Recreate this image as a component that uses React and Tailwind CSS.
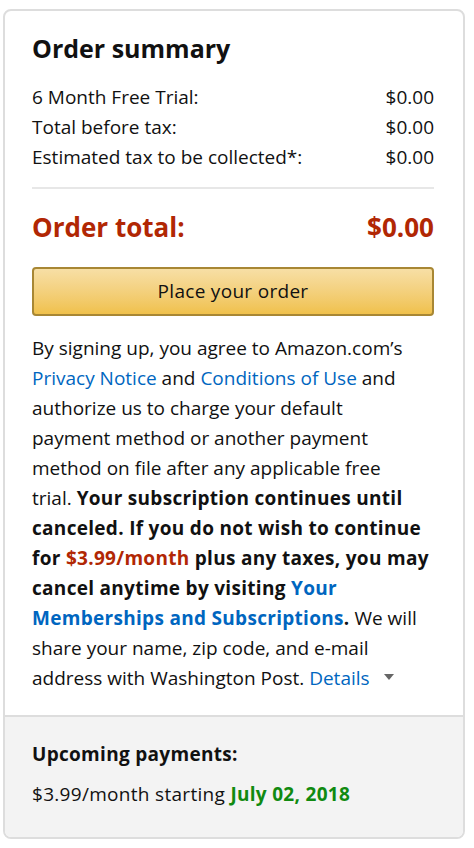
export default function App() {
  return (
    <div
      className="min-h-screen bg-white pt-[9px] pl-[3px] text-[#111]"
      style={{ fontFamily: "'Open Sans', 'Noto Sans', Arial, sans-serif" }}
    >
      <div className="w-[462px] h-[830px] border-2 border-[#ddd] rounded-[8px] overflow-hidden flex flex-col">
        {/* ================= SUMMARY ================= */}
        <div className="pl-[27px] pr-[29px] pt-[19px] pb-[22px]">
          <h1 className="text-[25px] leading-[36px] font-bold">Order summary</h1>

          <div className="mt-[16px] text-[19px] leading-[30px]">
            <div className="flex justify-between">
              <span>6 Month Free Trial:</span>
              <span>$0.00</span>
            </div>
            <div className="flex justify-between">
              <span>Total before tax:</span>
              <span>$0.00</span>
            </div>
            <div className="flex justify-between">
              <span>Estimated tax to be collected*:</span>
              <span>$0.00</span>
            </div>
          </div>

          <div className="mt-[15px] h-[2px] bg-[#e7e7e7]" />

          <div className="mt-[20px] flex justify-between text-[26px] leading-[36px] font-bold text-[#B12704]">
            <span>Order total:</span>
            <span>$0.00</span>
          </div>

          <button className="mt-[22px] w-full h-[49px] rounded-[4px] border-2 border-[#a88734] bg-gradient-to-b from-[#f7dfa5] to-[#f0c14b] text-[19px] tracking-[0.3px] text-[#111]">
            Place your order
          </button>

          <p className="mt-[17px] text-[19px] leading-[30px] whitespace-nowrap">
            By signing up, you agree to Amazon.com’s
            <br />
            <a className="text-[#0066c0]">Privacy Notice</a> and{" "}
            <a className="text-[#0066c0]">Conditions of Use</a> and
            <br />
            authorize us to charge your default
            <br />
            payment method or another payment
            <br />
            method on file after any applicable free
            <br />
            trial.{" "}
            <b className="tracking-[0.3px]">
              Your subscription continues until
              <br />
              canceled. If you do not wish to continue
              <br />
              for <span className="text-[#B12704]">$3.99/month</span> plus any taxes, you may
              <br />
              cancel anytime by visiting{" "}
              <a className="text-[#0066c0]">Your</a>
              <br />
              <a className="text-[#0066c0]">Memberships and Subscriptions</a>.
            </b>{" "}
            We will
            <br />
            share your name, zip code, and e-mail
            <br />
            address with Washington Post.{" "}
            <a className="text-[#0066c0]">Details</a>
            <span className="inline-block ml-[14px] align-middle w-0 h-0 border-l-[5px] border-r-[5px] border-t-[6px] border-l-transparent border-r-transparent border-t-[#666] mb-[6px]" />
          </p>
        </div>

        {/* ================= UPCOMING ================= */}
        <div className="flex-1 bg-[#f3f3f3] border-t-2 border-[#ddd] pl-[27px] pr-[29px] pt-[22px] text-[19px] leading-[30px]">
          <div className="font-bold tracking-[0.3px]">Upcoming payments:</div>
          <div className="mt-[10px] tracking-[0.3px]">
            $3.99/month starting{" "}
            <span className="font-bold text-[#108a10]">July 02, 2018</span>
          </div>
        </div>
      </div>
    </div>
  );
}
